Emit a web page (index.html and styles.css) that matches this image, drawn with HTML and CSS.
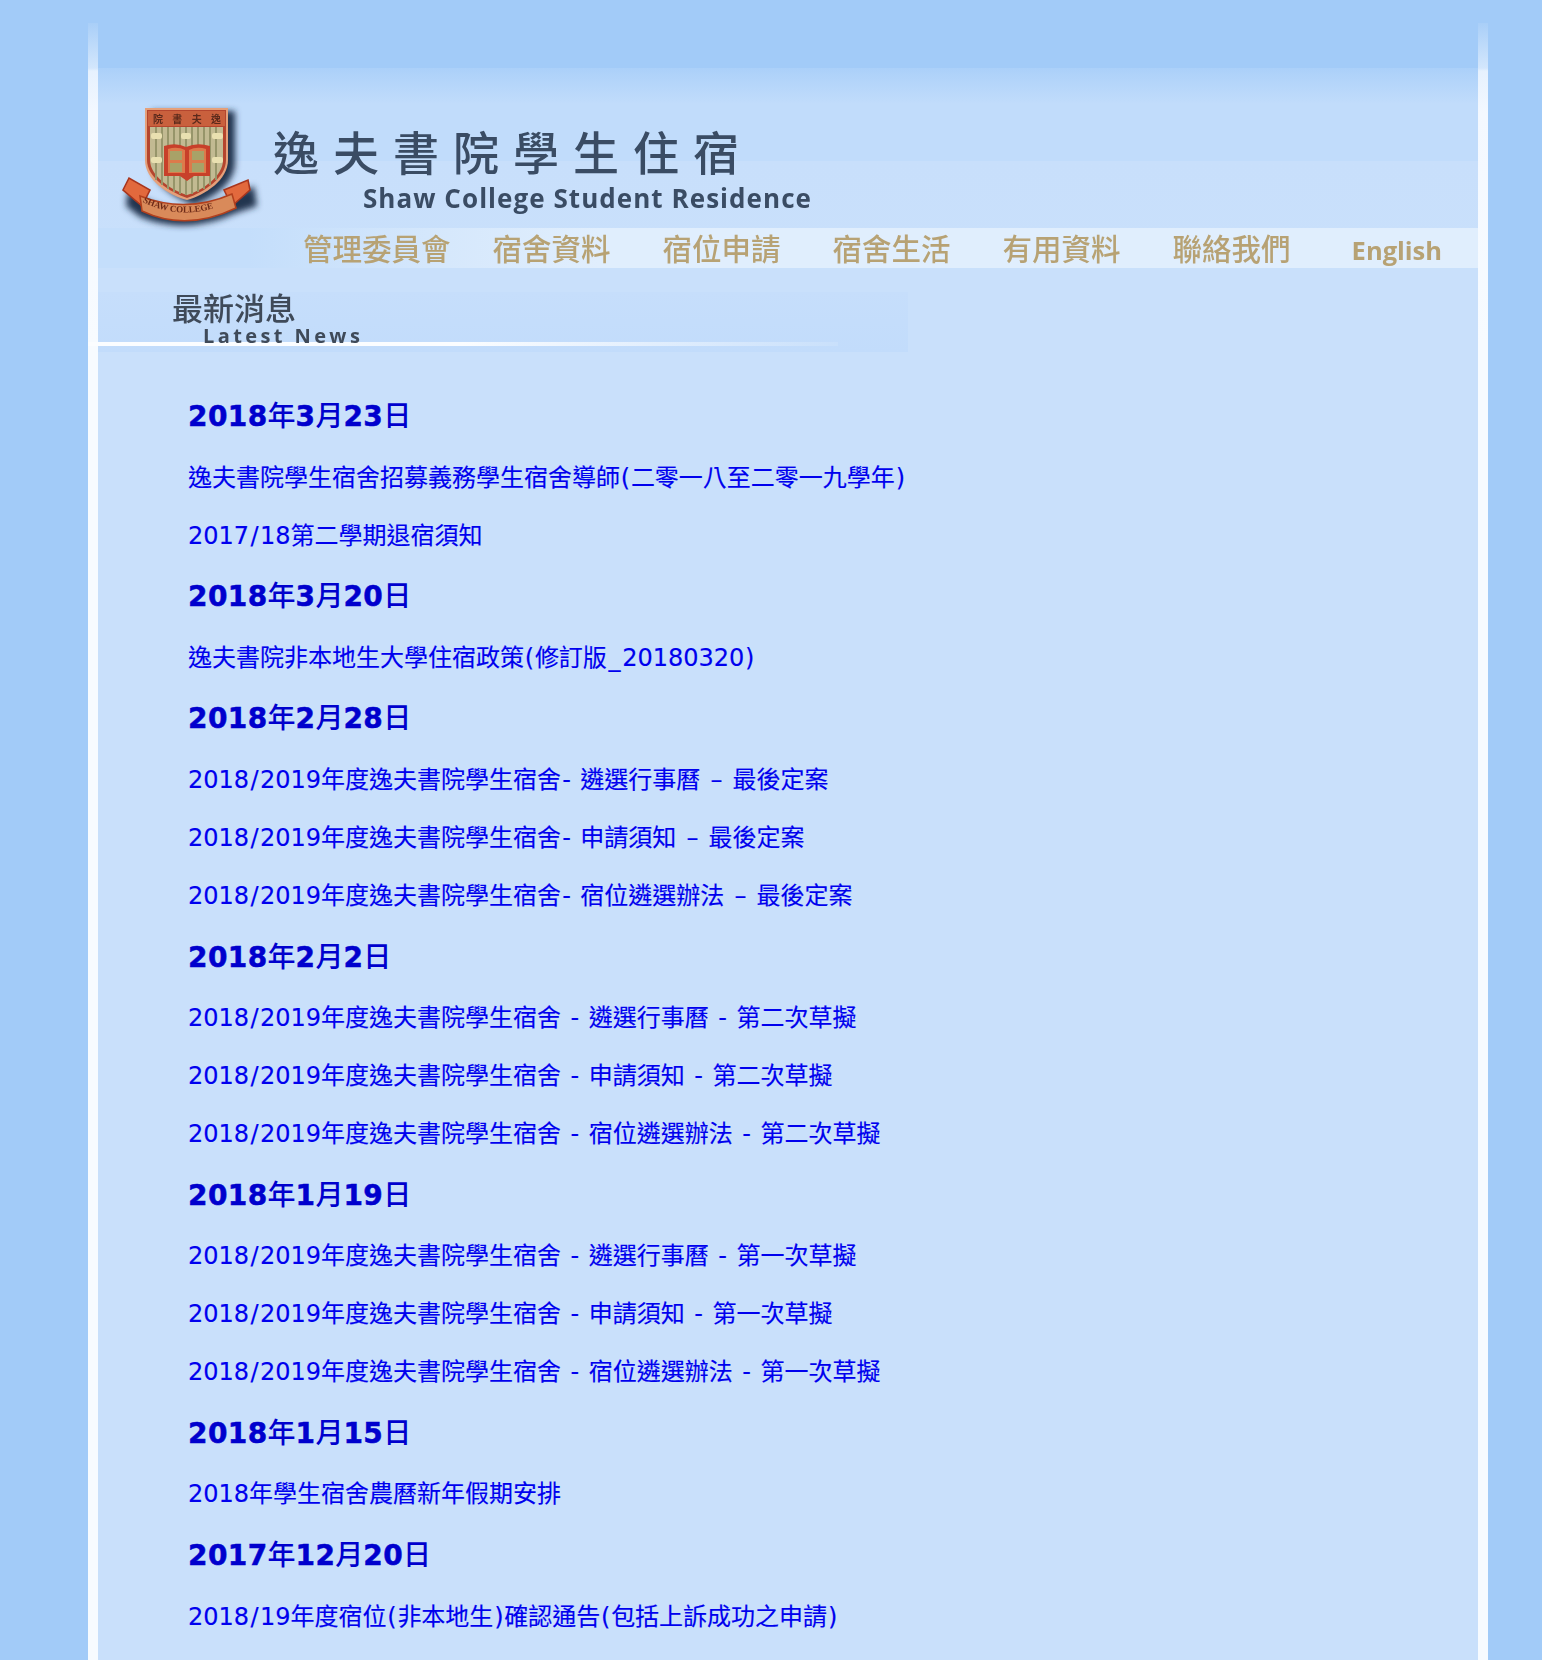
FILE: index.html
```html
<!DOCTYPE html>
<html lang="zh-Hant">
<head>
  <meta charset="UTF-8" />
  <title>逸夫書院學生住宿</title>
  <link rel="stylesheet" href="styles.css">
</head>
<body>
  <div class="page">
    <div class="inner">
      <div class="top-band"></div>
      <div class="header">
        <div class="brand">
          <svg class="crest" viewBox="115 100 150 135" width="150" height="135">
            <defs>
              <filter id="soft"><feGaussianBlur stdDeviation="3" /></filter>
              <filter id="tiny"><feGaussianBlur stdDeviation="0.5" /></filter>
              <path id="ribbonCurve" d="M139 200 Q186 226 238 198" />
            </defs>
            <g filter="url(#soft)" fill="#24344f">
              <path d="M152 111H235V163C235 183 213 198 194 205C175 198 152 183 152 163Z" />
              <path d="M128 190L146 200Q186 220 226 198L254 186L257 206L236 213Q186 236 140 217L126 206Z" />
            </g>
            <g filter="url(#tiny)">
              <path d="M145 108H228V160C228 180 205 195 187 200C168 195 145 180 145 160Z" fill="#e5a07a" />
              <path d="M147 110H226V160C226 178 204 192 187 198C170 192 147 178 147 160Z" fill="#b4452f" />
              <path d="M150 127H223V160C223 176 203 190 187 195C171 190 150 176 150 160Z" fill="#c2ba92" />
              <path d="M156 127V180M162 127V185M168 127V189M174 127V192M180 127V194M186 127V195M192 127V194M198 127V192M204 127V189M210 127V185M216 127V180" stroke="#97956a" stroke-width="2" />
              <rect x="148" y="111" width="77" height="15" fill="#c9603e" />
              <text class="crest-text" x="187" y="122.5" text-anchor="middle" textLength="68">院 書 夫 逸</text>
              <rect x="151" y="133" width="11" height="6" rx="2" fill="#e9e0b0" />
              <rect x="181" y="133" width="10" height="6" rx="2" fill="#e9e0b0" />
              <rect x="212" y="133" width="11" height="6" rx="2" fill="#e9e0b0" />
              <rect x="151" y="157" width="11" height="6" rx="2" fill="#e9e0b0" />
              <rect x="212" y="157" width="11" height="6" rx="2" fill="#e9e0b0" />
              <path d="M164 146Q176 142 186 147Q197 142 210 146V176H194L187 181L180 176H164Z" fill="#c8412a" />
              <path d="M168 149Q177 146 185 150V173H168ZM189 150Q197 146 206 149V173H189Z" fill="#dd7a4c" />
              <rect x="170" y="151" width="12" height="9" fill="#a8a268" />
              <rect x="192" y="151" width="12" height="9" fill="#a8a268" />
              <rect x="170" y="163" width="12" height="9" fill="#a8a268" />
              <rect x="192" y="163" width="12" height="9" fill="#a8a268" />
              <path d="M123 190L129 178L150 190L142 206Z" fill="#e2693c" stroke="#a8361f" stroke-width="1.6" />
              <path d="M250 190L248 180L224 190L232 206Z" fill="#e2693c" stroke="#a8361f" stroke-width="1.6" />
              <path d="M140 196Q186 214 232 194L236 208Q186 232 142 211Z" fill="#d98a5a" stroke="#b2401f" stroke-width="1.6" />
              <text class="crest-text crest-motto"><textPath href="#ribbonCurve" startOffset="4">SHAW COLLEGE</textPath></text>
            </g>
          </svg>
          <div class="brand-text">
            <div class="brand-zh">逸夫書院學生住宿</div>
            <div class="brand-en">Shaw College Student Residence</div>
          </div>
        </div>
        <div class="nav">
          <a class="nav-first">管理委員會</a>
          <a>宿舍資料</a>
          <a>宿位申請</a>
          <a>宿舍生活</a>
          <a>有用資料</a>
          <a class="nav-last">聯絡我們</a>
          <a class="nav-en">English</a>
        </div>
      </div>

      <div class="news-head">
        <div class="news-zh">最新消息</div>
        <div class="news-en">Latest News</div>
      </div>

      <div class="news">
        <h2>2018<span class="cj">年</span>3<span class="cj">月</span>23<span class="cj">日</span></h2>
        <p><a>逸夫書院學生宿舍招募義務學生宿舍導師<span class="pa">(</span>二零一八至二零一九學年<span class="pa">)</span></a></p>
        <p><a>2017<span class="sl">/</span>18第二學期退宿須知</a></p>

        <h2>2018<span class="cj">年</span>3<span class="cj">月</span>20<span class="cj">日</span></h2>
        <p><a>逸夫書院非本地生大學住宿政策<span class="pa">(</span>修訂版<span class="us">_</span>20180320<span class="pa">)</span></a></p>

        <h2>2018<span class="cj">年</span>2<span class="cj">月</span>28<span class="cj">日</span></h2>
        <p><a>2018<span class="sl">/</span>2019年度逸夫書院學生宿舍<span class="hy">-</span> 遴選行事曆 <span class="en">–</span> 最後定案</a></p>
        <p><a>2018<span class="sl">/</span>2019年度逸夫書院學生宿舍<span class="hy">-</span> 申請須知 <span class="en">–</span> 最後定案</a></p>
        <p><a>2018<span class="sl">/</span>2019年度逸夫書院學生宿舍<span class="hy">-</span> 宿位遴選辦法 <span class="en">–</span> 最後定案</a></p>

        <h2>2018<span class="cj">年</span>2<span class="cj">月</span>2<span class="cj">日</span></h2>
        <p><a>2018<span class="sl">/</span>2019年度逸夫書院學生宿舍 <span class="hy">-</span> 遴選行事曆 <span class="hy">-</span> 第二次草擬</a></p>
        <p><a>2018<span class="sl">/</span>2019年度逸夫書院學生宿舍 <span class="hy">-</span> 申請須知 <span class="hy">-</span> 第二次草擬</a></p>
        <p><a>2018<span class="sl">/</span>2019年度逸夫書院學生宿舍 <span class="hy">-</span> 宿位遴選辦法 <span class="hy">-</span> 第二次草擬</a></p>

        <h2>2018<span class="cj">年</span>1<span class="cj">月</span>19<span class="cj">日</span></h2>
        <p><a>2018<span class="sl">/</span>2019年度逸夫書院學生宿舍 <span class="hy">-</span> 遴選行事曆 <span class="hy">-</span> 第一次草擬</a></p>
        <p><a>2018<span class="sl">/</span>2019年度逸夫書院學生宿舍 <span class="hy">-</span> 申請須知 <span class="hy">-</span> 第一次草擬</a></p>
        <p><a>2018<span class="sl">/</span>2019年度逸夫書院學生宿舍 <span class="hy">-</span> 宿位遴選辦法 <span class="hy">-</span> 第一次草擬</a></p>

        <h2>2018<span class="cj">年</span>1<span class="cj">月</span>15<span class="cj">日</span></h2>
        <p><a>2018年學生宿舍農曆新年假期安排</a></p>

        <h2>2017<span class="cj">年</span>12<span class="cj">月</span>20<span class="cj">日</span></h2>
        <p><a>2018<span class="sl">/</span>19年度宿位<span class="pa">(</span>非本地生<span class="pa">)</span>確認通告<span class="pa">(</span>包括上訴成功之申請<span class="pa">)</span></a></p>
      </div>
    </div>
  </div>
</body>
</html>
```

FILE: styles.css
```css
body {
  margin: 0;
  padding-top: 23px;
  background-color: #a2cbf8;
  font-family: "DejaVu Sans", "Noto Sans CJK TC", sans-serif;
}
.page {
  width: 1380px;
  margin-left: 88px;
  padding: 0 10px;
  background: linear-gradient(to bottom, #a9cff8 0, #d3e6fc 45px, #e6f1fe 48px, #f3f8ff 90px, #f7fbff 320px);
}
.inner {
  background-color: #c9e0fb;
}
.top-band {
  height: 45px;
  background-color: #a2cbf8;
}
.header {
  box-sizing: border-box;
  height: 200px;
  padding-top: 32px;
  background: linear-gradient(to bottom, #abd0f9 0, #b4d5fa 14px, #c1dcfb 36px, #c1dcfb 93px, #c8dffb 93px, #c9e0fb 200px);
}
.brand {
  display: flex;
  align-items: flex-start;
  height: 128px;
  padding-left: 17px;
}
.crest {
  flex: none;
}
.crest-text {
  font-family: "Noto Sans CJK TC", sans-serif;
  font-size: 10px;
  font-weight: 700;
  fill: #5b2a1c;
}
.crest-motto {
  font-family: "Liberation Serif", serif;
  font-size: 9px;
  fill: #6d2a18;
}
.brand-text {
  margin-left: 8px;
  padding-top: 23px;
  color: #3a4c64;
  filter: blur(0.6px);
}
.brand-zh {
  font-family: "Noto Sans CJK TC", sans-serif;
  font-size: 46px;
  font-weight: 500;
  line-height: 54px;
  letter-spacing: 14px;
}
.brand-en {
  margin: 4px 0 0 90px;
  font-family: "Open Sans", sans-serif;
  font-size: 26px;
  font-weight: 700;
  line-height: 34px;
  letter-spacing: 1.05px;
}
.nav {
  display: flex;
  align-items: center;
  gap: 52px;
  height: 38px;
  padding: 0 0 2px 205px;
  background: linear-gradient(to right, #c4defb 150px, #d6e8fc 350px, #e0eefd 500px);
  color: #b7a274;
  font-family: "Noto Sans CJK TC", sans-serif;
  font-size: 29.5px;
  font-weight: 500;
}
.nav a {
  filter: blur(0.5px);
}
.nav-first {
  margin-right: -10px;
}
.nav-last {
  margin-right: 9px;
}
.nav-en {
  margin-top: 5px;
  font-family: "Open Sans", sans-serif;
  font-size: 25.5px;
  font-weight: 700;
}
.news-head {
  position: relative;
  width: 810px;
  height: 60px;
  margin-top: 24px;
  background: linear-gradient(to bottom, #c6defb, #c2dcfb);
  color: #3f4a59;
}
.news-head::after {
  content: "";
  position: absolute;
  left: -10px;
  top: 50px;
  width: 750px;
  height: 4px;
  background: linear-gradient(to right, #fbfdff 50%, #c9e0fb);
}
.news-zh {
  padding-left: 74px;
  font-family: "Noto Sans CJK TC", sans-serif;
  font-size: 31px;
  font-weight: 500;
  line-height: 30px;
  filter: blur(0.5px);
}
.news-en {
  position: relative;
  z-index: 1;
  margin-top: 4px;
  padding-left: 105px;
  font-family: "Open Sans", sans-serif;
  font-size: 20px;
  font-weight: 700;
  line-height: 20px;
  letter-spacing: 3.4px;
  filter: blur(0.4px);
}
.news {
  padding: 48px 0 24px 90px;
}
.news h2 {
  margin: 27.7px 0 26.5px;
  font-size: 28px;
  font-weight: 700;
  line-height: 34px;
  letter-spacing: 0.4px;
  color: #0000cd;
  -webkit-text-stroke: 0.5px #0000cd;
}
.news h2:first-child {
  margin-top: 0;
}
.news p {
  margin: 0 0 24px;
  font-size: 24px;
  line-height: 34px;
  word-spacing: 0.8px;
  color: #0000ee;
  -webkit-text-stroke: 0.15px #0000ee;
}
/* the reference's latin font is wider on these glyphs than DejaVu */
.sl {
  padding: 0 1.4px;
}
.hy {
  padding: 0 1.1px;
}
.en {
  padding: 0 1.65px;
}
.pa {
  padding: 0 0.75px;
}
.us {
  padding: 0 1.65px;
}
.cj {
  font-weight: 500;
  letter-spacing: 0;
  -webkit-text-stroke: 0;
}
```
